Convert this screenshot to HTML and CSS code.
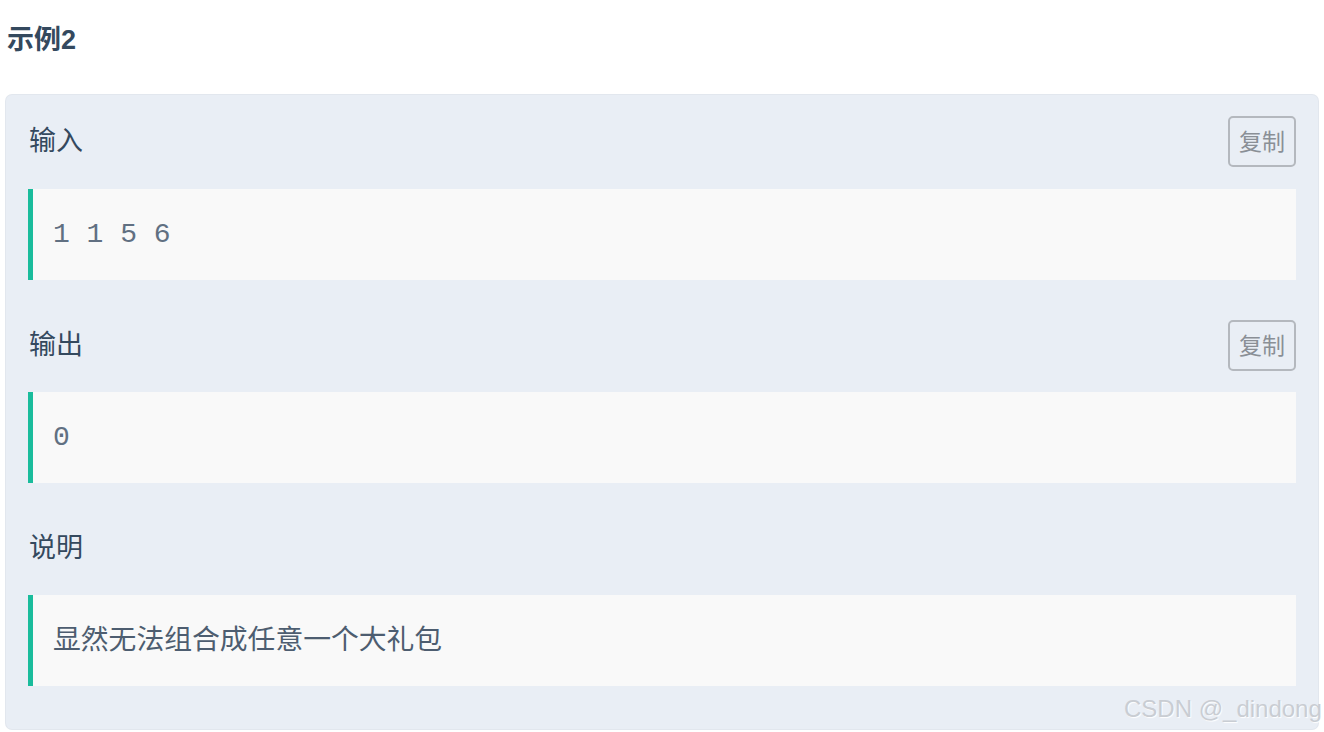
FILE: index.html
```html
<!DOCTYPE html>
<html lang="zh">
<head>
<meta charset="utf-8">
<link rel="stylesheet" href="styles.css">
</head>
<body>
<div class="page">
  <h3 class="title">示例2</h3>
  <div class="example">
    <div class="row">
      <span class="label">输入</span>
      <button class="copy">复制</button>
    </div>
    <pre class="block mono">1 1 5 6</pre>

    <div class="row sep">
      <span class="label">输出</span>
      <button class="copy">复制</button>
    </div>
    <pre class="block mono">0</pre>

    <div class="row sep">
      <span class="label">说明</span>
    </div>
    <div class="block text">显然无法组合成任意一个大礼包</div>
  </div>
  <div class="watermark">CSDN @_dindong</div>
</div>
</body>
</html>
```
FILE: styles.css
```css
html, body {
  margin: 0;
  padding: 0;
  background: #ffffff;
}
body {
  font-family: "Noto Sans CJK SC", "Noto Sans", sans-serif;
  color: #34495e;
  overflow: hidden;
}
.page {
  position: relative;
  padding: 0 6px;
  height: 732px;
}
.title {
  margin: 0;
  padding-top: 22px;
  height: 95px;
  box-sizing: border-box;
  font-size: 27px;
  line-height: 36px;
  font-weight: 700;
  font-family: "Liberation Sans", "Noto Sans CJK SC", sans-serif;
  padding-left: 1px;
  color: #34495e;
}
.example {
  background: #e9eef5;
  border-radius: 6px;
  padding: 21px 22px 43px 22px;
  box-shadow: 0 0 0 1px #e2e7ee;
}
.row {
  display: flex;
  justify-content: space-between;
  align-items: center;
  height: 51px;
  margin-bottom: 22px;
}
.row.sep {
  margin-top: 40px;
  margin-bottom: 21px;
}
.label {
  font-size: 27px;
  line-height: 36px;
  padding-left: 1px;
  padding-bottom: 6px;
  color: #34495e;
}
.copy {
  width: 68px;
  height: 51px;
  border: 2px solid #b4b8be;
  border-radius: 5px;
  background: transparent;
  color: #8a8f96;
  font-family: "Noto Sans CJK SC", sans-serif;
  font-size: 23px;
  padding: 0 0 3px 0;
  line-height: 1;
}
.block {
  margin: 0;
  height: 91px;
  box-sizing: border-box;
  background: #f9f9f9;
  border-left: 5px solid #1abc9c;
  padding-left: 20px;
  display: flex;
  align-items: center;
  color: #4d5d70;
}
.mono {
  font-family: "Liberation Mono", "DejaVu Sans Mono", monospace;
  font-size: 28px;
  line-height: 36px;
  color: #617082;
}
.text {
  font-family: "Noto Sans CJK SC", sans-serif;
  font-size: 27.8px;
  line-height: 36px;
  padding-bottom: 8px;
}
.watermark {
  position: absolute;
  left: 1124px;
  top: 694px;
  white-space: nowrap;
  font-family: "Liberation Sans", sans-serif;
  font-size: 24px;
  line-height: 30px;
  color: #c9cdd3;
  text-shadow: 1px 1px 1px #ffffff;
}
```
